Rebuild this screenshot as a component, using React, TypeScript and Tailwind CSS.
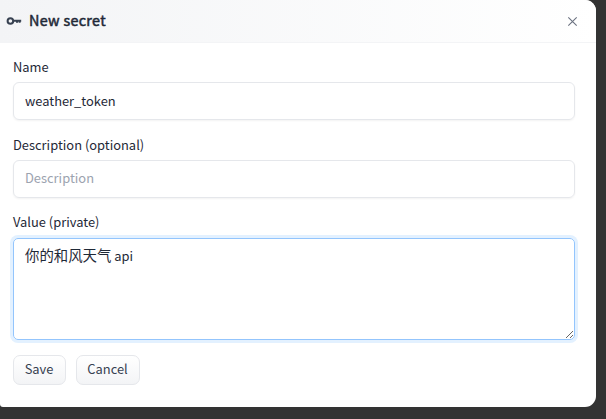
import React from "react";

const font = "font-['Noto_Sans_CJK_SC','Noto_Sans',sans-serif]";

function Label({ children }: { children: React.ReactNode }) {
  return <span className="block h-5 text-[12.9px] leading-5 text-[#1f2937]">{children}</span>;
}

export default function App() {
  return (
    <div className={`h-[419px] w-[606px] overflow-hidden bg-[#333333] ${font}`}>
      <div className="h-[407px] w-[596px] overflow-hidden rounded-r-[11px] rounded-bl-[3px] bg-white">
        <header className="flex h-[43px] items-center border-b border-[#f3f4f6] bg-linear-to-r/srgb from-[#f3f4f6] to-white pl-[6px] pr-[18px]">
          <svg className="mb-px h-[14px] w-[16px]" viewBox="0 0 16 14" fill="none" stroke="#374151">
            <circle cx="4.4" cy="7" r="2.8" strokeWidth="2" />
            <path d="M7.2 6.7H15.2M11 6.8v2M13.6 6.8v2" strokeWidth="2" />
          </svg>
          <h1 className="mb-[3px] ml-[7px] flex-1 text-[14.4px] font-normal leading-5 tracking-[0.3px] text-[#1f2937] [-webkit-text-stroke:0.5px_#1f2937]">New secret</h1>
          <svg className="h-[11px] w-[11px]" viewBox="0 0 11 11" stroke="#6b7280" strokeWidth="1.1">
            <path d="M1.3 1.3l8.4 8.4M9.7 1.3L1.3 9.7" />
          </svg>
        </header>
        <form className="pl-[13px] pr-[21px] pt-[14px] text-[12.9px] text-[#1f2937]">
          <Label>Name</Label>
          <input className="mt-[5px] block h-[38px] w-full rounded-[6px] border border-[#e5e7eb] px-[11px] pb-[2px] shadow-xs outline-none" defaultValue="weather_token" />
          <div className="mt-[15px]"><Label>Description (optional)</Label></div>
          <input className="mt-[5px] block h-[38px] w-full rounded-[6px] border border-[#e5e7eb] px-[11px] pb-[3px] shadow-xs outline-none placeholder:text-[#9ca3af]" placeholder="Description" />
          <div className="mt-[14px]"><Label>Value (private)</Label></div>
          <div
            role="textbox"
            aria-multiline="true"
            className="mt-[6px] block h-[102px] w-full resize-y overflow-auto rounded-[5px] border border-[#93c5fd] px-[11px] py-[5px] text-[14.4px] leading-[22px] shadow-[0_0_0_3px_#e3f1ff] outline-none"
          >
            你的和风天气<span className="text-[12.9px]"> api</span>
          </div>
          <div className="mt-[15px] flex gap-[10px] text-[#374151]">
            <button type="button" className="h-[30px] w-[53px] rounded-[7px] border border-[#e5e7eb] bg-gradient-to-b from-white to-[#f3f4f6] pb-[2px] pr-px">Save</button>
            <button type="button" className="h-[30px] w-[64px] rounded-[7px] border border-[#e5e7eb] bg-gradient-to-b from-white to-[#f3f4f6] pb-[2px] pr-px">Cancel</button>
          </div>
        </form>
      </div>
    </div>
  );
}
